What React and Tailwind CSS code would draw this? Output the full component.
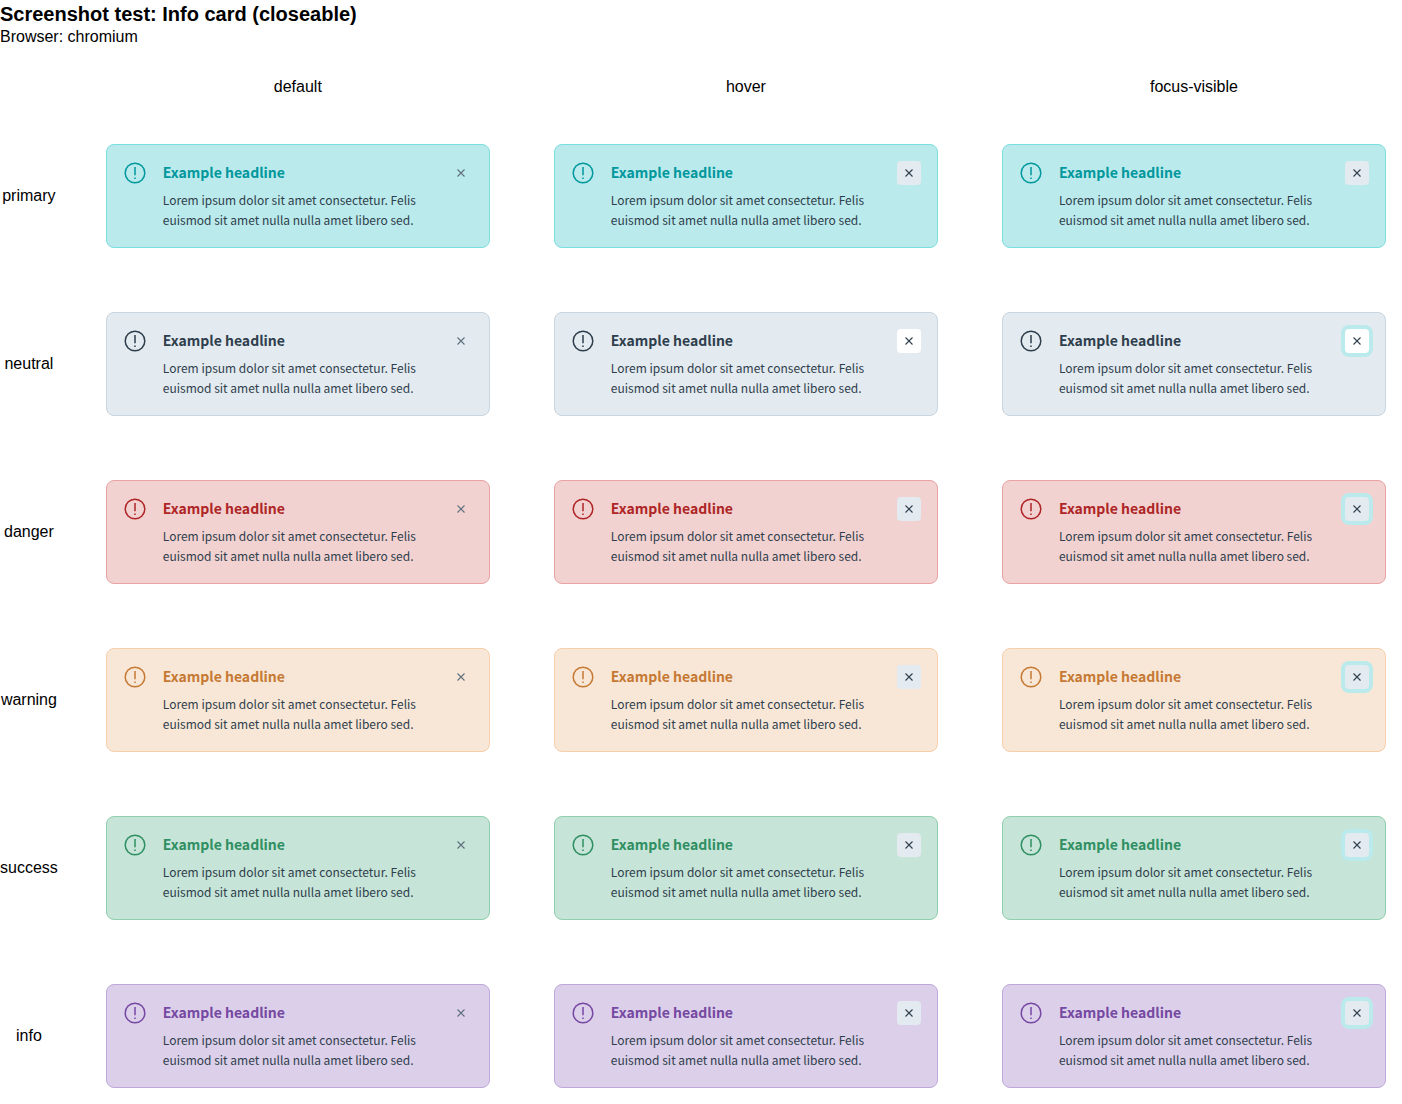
const variants = [
  { name: "primary", card: "bg-[#baeaeb] border-[#7adfdf]", accent: "text-[#00979d]", active: "bg-[#e3eaf0]" },
  { name: "neutral", card: "bg-[#e3eaf0] border-[#c9d5df]", accent: "text-[#2f3e4c]", active: "bg-white" },
  { name: "danger", card: "bg-[#f2d2d1] border-[#e9a3a2]", accent: "text-[#ae2526]", active: "bg-[#e3eaf0]" },
  { name: "warning", card: "bg-[#f8e7d7] border-[#f4cfac]", accent: "text-[#c67933]", active: "bg-[#e3eaf0]" },
  { name: "success", card: "bg-[#c6e4d7] border-[#90cfae]", accent: "text-[#2f8f62]", active: "bg-[#e3eaf0]" },
  { name: "info", card: "bg-[#dccfe9] border-[#bfa9d8]", accent: "text-[#7548a2]", active: "bg-[#e3eaf0]" },
];

const states = ["default", "hover", "focus-visible"];

function AlertIcon() {
  return (
    <svg viewBox="0 0 24 24" className="size-6 shrink-0" fill="none" stroke="currentColor" strokeWidth="1.5" aria-hidden="true">
      <circle cx="12" cy="12" r="9.8" />
      <path d="M12 6v8.2M12 16.5v1.5" />
    </svg>
  );
}

function CloseIcon() {
  return (
    <svg viewBox="0 0 16 16" className="size-4" fill="none" stroke="currentColor" strokeWidth="1.1" aria-hidden="true">
      <path d="M4.5 4.5l7 7M11.5 4.5l-7 7" />
    </svg>
  );
}

function CloseButton({ state, active }) {
  const look =
    state === "default"
      ? "text-[#5f6f7e]"
      : state === "hover"
        ? `text-[#2f3e4c] ${active}`
        : `text-[#2f3e4c] ${active} ring-4 ring-[#baeaeb]`;
  return (
    <button type="button" aria-label="Close" className={`flex size-6 shrink-0 items-center justify-center rounded-sm ${look}`}>
      <CloseIcon />
    </button>
  );
}

function InfoCard({ variant, state }) {
  return (
    <article className={`flex items-start gap-4 rounded-lg border p-4 font-['Noto_Sans_CJK_SC',sans-serif] ${variant.card}`}>
      <div className={variant.accent}>
        <AlertIcon />
      </div>
      <div className="min-w-0 flex-1">
        <div className="flex items-start justify-between">
          <h2 className={`text-[14px] leading-[22px] font-bold ${variant.accent}`}>Example headline</h2>
          <CloseButton state={state} active={variant.active} />
        </div>
        <p className="mt-[5px] pr-6 pb-px text-[12px] leading-5 text-[#2f3e4c]">
          Lorem ipsum dolor sit amet consectetur. Felis euismod sit amet nulla nulla amet libero sed.
        </p>
      </div>
    </article>
  );
}

export default function App() {
  return (
    <main className="bg-white font-['Liberation_Sans',Arial,sans-serif] text-[16px] leading-[18px] text-black">
      <h1 className="text-xl leading-7 font-bold">Screenshot test: Info card (closeable)</h1>
      <p>Browser: chromium</p>
      <div className="mt-8 grid grid-cols-[auto_repeat(3,minmax(0,1fr))] items-center gap-8">
        <span />
        {states.map((state) => (
          <span key={state} className="text-center">{state}</span>
        ))}
        {variants.map((variant) => (
          <div key={variant.name} className="contents">
            <span className="text-center">{variant.name}</span>
            {states.map((state) => (
              <div key={state} className="p-4">
                <InfoCard variant={variant} state={state} />
              </div>
            ))}
          </div>
        ))}
      </div>
    </main>
  );
}
